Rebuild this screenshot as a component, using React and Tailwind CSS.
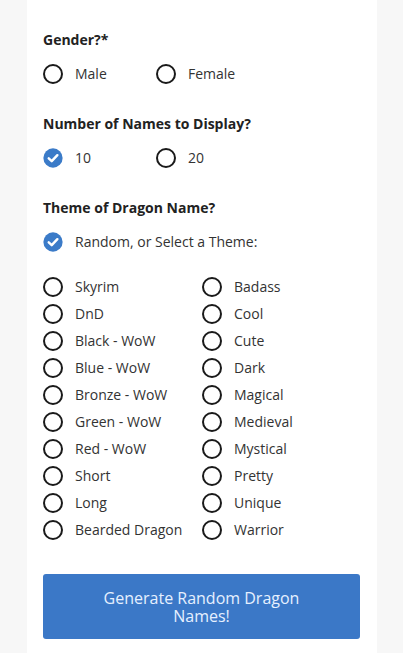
import React from "react";

function Radio({ checked }) {
  if (checked) {
    return (
      <svg width="20" height="20" viewBox="0 0 22 22" className="shrink-0 overflow-visible">
        <circle cx="11" cy="11" r="10.6" fill="#3b7bc8" />
        <path d="M6.3 11.3 L9.6 14.4 L15.8 7.9" fill="none" stroke="#fff" strokeWidth="2.7" strokeLinecap="round" strokeLinejoin="round" />
      </svg>
    );
  }
  return <span className="block w-[20px] h-[20px] shrink-0 rounded-full border-2 border-[#1a1a1a] bg-white" />;
}

function Option({ label, checked, className = "" }) {
  return (
    <div className={"flex items-center gap-3 h-[24px] " + className}>
      <Radio checked={checked} />
      <span className="text-[14px] text-[#333] leading-none whitespace-nowrap">{label}</span>
    </div>
  );
}

const left = ["Skyrim", "DnD", "Black - WoW", "Blue - WoW", "Bronze - WoW", "Green - WoW", "Red - WoW", "Short", "Long", "Bearded Dragon"];
const right = ["Badass", "Cool", "Cute", "Dark", "Magical", "Medieval", "Mystical", "Pretty", "Unique", "Warrior"];

export default function App() {
  return (
    <div className="w-[403px] h-[653px] bg-[#f7f7f7] overflow-hidden" style={{ fontFamily: '"Open Sans", "Noto Sans", sans-serif' }}>
      <div className="ml-[27px] w-[350px] h-full bg-white px-4 pt-[30px]">
        <h2 className="text-[14px] font-bold text-[#222] leading-[20px]">Gender?*</h2>
        <div className="flex mt-3">
          <Option label="Male" className="w-[113px]" />
          <Option label="Female" />
        </div>

        <h2 className="mt-[28px] text-[14px] font-bold text-[#222] leading-[20px]">Number of Names to Display?</h2>
        <div className="flex mt-3">
          <Option label="10" checked className="w-[113px]" />
          <Option label="20" />
        </div>

        <h2 className="mt-[28px] text-[14px] font-bold text-[#222] leading-[20px]">Theme of Dragon Name?</h2>
        <div className="mt-3">
          <Option label="Random, or Select a Theme:" checked />
        </div>

        <div className="mt-[19px] grid grid-cols-[159px_1fr]">
          {left.map((l, i) => (
            <React.Fragment key={l}>
              <div className="h-[27px] flex items-center">
                <Option label={l} />
              </div>
              <div className="h-[27px] flex items-center">
                <Option label={right[i]} />
              </div>
            </React.Fragment>
          ))}
        </div>

        <button className="mt-[31px] w-[317px] h-[65px] bg-[#3b78c7] rounded-[3px] px-10 text-[16px] leading-[18px] text-[#e6f0ff] text-center">
          Generate Random Dragon Names!
        </button>
      </div>
    </div>
  );
}
